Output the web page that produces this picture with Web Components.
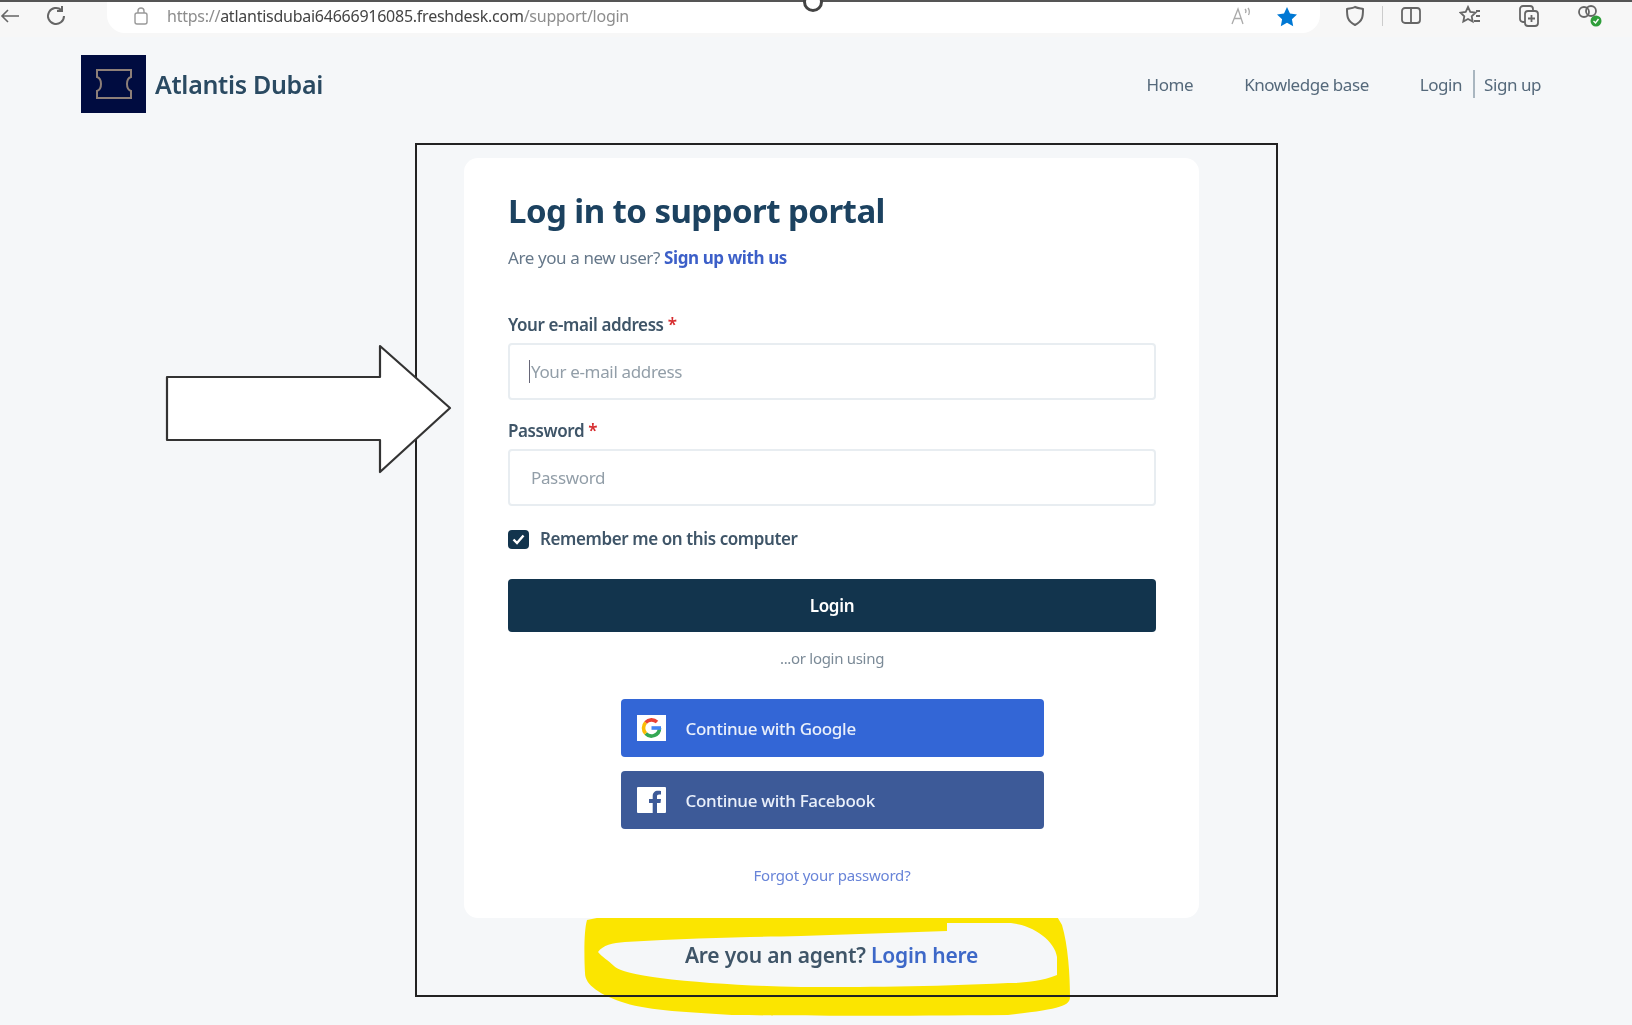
<!DOCTYPE html>
<html lang="en">
<head>
<meta charset="utf-8">
<title>Log in to support portal</title>
<style>
  html, body { margin: 0; background: #f5f7f9; }
  body { font-family: "Noto Sans", "Open Sans", sans-serif; color: #12344d; }
</style>
</head>
<body>
<page-shell>
  <browser-bar url-host="atlantisdubai64666916085.freshdesk.com"></browser-bar>
  <site-header brand="Atlantis Dubai"></site-header>
  <annotation-frame>
    <login-card>
      <text-field placeholder="Your e-mail address" caret>Your e-mail address</text-field>
      <text-field placeholder="Password" class="second">Password</text-field>
    </login-card>
    <agent-line></agent-line>
  </annotation-frame>
  <callout-arrow></callout-arrow>
  <yellow-scribble></yellow-scribble>
</page-shell>

<script>
// small helper, every element gets an open shadow root from its template
function register(tag, markup) {
  const tpl = document.createElement('template');
  tpl.innerHTML = markup;
  customElements.define(tag, class extends HTMLElement {
    constructor() {
      super();
      this.attachShadow({ mode: 'open' }).appendChild(tpl.content.cloneNode(true));
    }
    connectedCallback() {
      this.shadowRoot.querySelectorAll('[data-attr]').forEach(el => {
        const name = el.dataset.attr;
        if (el.tagName === 'INPUT') el.placeholder = this.getAttribute(name) || '';
        else el.textContent = this.getAttribute(name) || '';
      });
      const caret = this.shadowRoot.querySelector('.caret');
      if (caret && !this.hasAttribute('caret')) caret.remove();
    }
  });
}

register('page-shell', `
  <style>
    :host { display: block; position: relative; width: 1632px; height: 1025px; overflow: hidden; background: #f5f7f9; filter: blur(.55px); }
  </style>
  <slot></slot>
`);

register('browser-bar', `
  <style>
    :host { display: flex; align-items: flex-start; height: 37px; background: #f7f7f7; position: relative; border-top: 2px solid #555; box-sizing: border-box; }
    svg { display: block; flex: none; }
    .left { display: flex; align-items: center; height: 28px; gap: 24px; width: 107px; flex: none; padding-left: 0; box-sizing: border-box; }
    .address { flex: none; width: 1213px; height: 31px; background: #fff; border-radius: 0 0 18px 18px; display: flex; align-items: center; padding: 0 22px 3px 26px; box-sizing: border-box; font: 16px "Noto Sans", sans-serif; letter-spacing: -.25px; color: #8d8d8d; }
    .address b { font-weight: 400; color: #444; }
    .url { margin-left: 18px; flex: 1; white-space: nowrap; }
    .star { margin-left: 24px; }
    .tools { display: flex; align-items: center; height: 28px; gap: 37px; padding-left: 24px; }
    .sep { width: 1px; height: 20px; background: #ccc; margin: 0 -20px 0 -21px; }
    .ring { position: absolute; left: 803px; top: -10px; width: 20px; height: 20px; border: 3px solid #444; border-radius: 50%; box-sizing: border-box; background: #fff; }
  </style>
  <div class="left">
    <svg width="20" height="16" viewBox="0 0 20 16" fill="none" stroke="#666" stroke-width="1.6"><path d="M19 8H2M8 2L2 8l6 6"/></svg>
    <svg width="24" height="24" viewBox="0 0 24 24" fill="none" stroke="#666" stroke-width="2"><path d="M20 12a8 8 0 1 1-2.5-5.8"/><path d="M18 2v5h-5"/></svg>
  </div>
  <div class="address">
    <svg width="16" height="20" viewBox="0 0 16 20" fill="none" stroke="#999" stroke-width="1.4"><rect x="2" y="7" width="12" height="11" rx="2"/><path d="M5 7V5a3 3 0 0 1 6 0v2"/></svg>
    <div class="url">https://<b data-attr="url-host"></b>/support/login</div>
    <svg width="22" height="20" viewBox="0 0 22 20" fill="none" stroke="#aaa" stroke-width="1.3"><path d="M2 18L8 3l5 15M4.5 12.5h7"/><path d="M15 3c1 1 1 3 .4 4M18 2c1.500 2 1.500 5 .5 7"/></svg>
    <svg class="star" width="22" height="21" viewBox="0 0 22 21" fill="#0078d4"><path d="M11 1l3 6.500 7 .9-5.100 4.800 1.300 7L11 16.800 4.800 20.200l1.300-7L1 8.400l7-.9z"/></svg>
  </div>
  <div class="tools">
    <svg width="22" height="24" viewBox="0 0 22 24" fill="none" stroke="#666" stroke-width="2"><path d="M11 3c4 2 7 1 8 2 0 7 0 12-8 16C3 17 3 12 3 5c1-1 5 0 8-2z"/></svg>
    <i class="sep"></i>
    <svg width="22" height="20" viewBox="0 0 22 20" fill="none" stroke="#666" stroke-width="1.8"><rect x="2" y="2" width="18" height="15" rx="3"/><path d="M11 2v15"/></svg>
    <svg width="22" height="22" viewBox="0 0 22 22" fill="none" stroke="#666" stroke-width="1.800"><path d="M9 2l2.300 5 5.200.7-3.800 3.600 1 5.200L9 14l-4.700 2.500 1-5.200L1.500 7.700 6.700 7z"/><path d="M17 6h4M17 11h4M15 16h6"/></svg>
    <svg width="22" height="24" viewBox="0 0 22 24" fill="none" stroke="#666" stroke-width="1.800"><rect x="7" y="7" width="13" height="15" rx="3"/><path d="M7 18H5a3 3 0 0 1-3-3V5a3 3 0 0 1 3-3h7a3 3 0 0 1 3 3v2"/><path d="M13.500 11v7M10 14.500h7"/></svg>
    <svg width="26" height="24" viewBox="0 0 26 24" fill="none" stroke="#666" stroke-width="1.800"><circle cx="7" cy="8" r="5"/><circle cx="14" cy="7" r="5"/><circle cx="19" cy="17" r="5.500" fill="#2e9e3a" stroke="none"/><path d="M16.500 17l2 2 3-4" stroke="#fff" stroke-width="1.400"/></svg>
  </div>
  <div class="ring"></div>
`);

register('site-header', `
  <style>
    :host { display: flex; align-items: center; height: 94px; padding: 0 91px 0 81px; }
    .logo { width: 65px; height: 58px; background: #000c40; display: flex; align-items: center; justify-content: center; flex: none; }
    .brand { margin-left: 9px; font: 600 25px/1 "Noto Sans", sans-serif; color: #2a4a62; letter-spacing: -.3px; }
    nav { margin-left: auto; display: flex; align-items: center; font: 400 17px/1 "Noto Sans", sans-serif; letter-spacing: -.45px; color: #55697b; }
    nav span { white-space: nowrap; }
    .kb { margin-left: 51px; }
    .login { margin-left: 51px; }
    .bar { width: 2px; height: 28px; background: #a9b6c0; margin: 0 9px 0 11px; }
  </style>
  <div class="logo">
    <svg width="38" height="32" viewBox="0 0 38 32" fill="none" stroke="#8d7f78" stroke-width="2"><path d="M2 2h34v7c-3 1-4 3-4 7s1 6 4 7v7H2v-7c3-1 4-3 4-7s-1-6-4-7z"/></svg>
  </div>
  <div class="brand" data-attr="brand"></div>
  <nav>
    <span>Home</span>
    <span class="kb">Knowledge base</span>
    <span class="login">Login</span>
    <i class="bar"></i>
    <span>Sign up</span>
  </nav>
`);

register('annotation-frame', `
  <style>
    :host { display: block; box-sizing: border-box; width: 863px; height: 854px; margin: 12px 0 0 415px; border: 2px solid #222; padding: 13px 0 0 47px; position: relative; z-index: 2; }
  </style>
  <slot></slot>
`);

register('login-card', `
  <style>
    :host { display: block; box-sizing: border-box; width: 735px; height: 760px; padding: 33px 43px 31px 44px; background: #fff; border-radius: 14px; }
    h1 { margin: 0; font: 700 33px/40px "Noto Sans", sans-serif; letter-spacing: -.55px; color: #1c4260; }
    .sub { margin-top: 15px; font: 400 17px/24px "Noto Sans", sans-serif; letter-spacing: -.4px; color: #66788a; }
    .sub a { color: #3c5fc8; font-weight: 700; }
    ::slotted(text-field) { margin-top: 44px; }
    ::slotted(text-field.second) { margin-top: 20px; }
    .remember { margin-top: 22px; display: flex; align-items: center; height: 22px; font: 600 17px/22px "Noto Sans", sans-serif; letter-spacing: -.4px; color: #3f5568; }
    .box { width: 21px; height: 19px; border-radius: 4px; background: #12344d; margin-right: 11px; display: flex; align-items: center; justify-content: center; }
    .login { margin-top: 29px; height: 53px; border-radius: 4px; background: #12344d; color: #fff; display: flex; align-items: center; justify-content: center; font: 600 17px "Noto Sans", sans-serif; letter-spacing: -.3px; }
    .or { margin-top: 16px; text-align: center; font: 400 15px/20px "Noto Sans", sans-serif; letter-spacing: -.3px; color: #7b8a97; }
    .sso { margin-top: 31px; display: flex; flex-direction: column; align-items: center; gap: 14px; }
    .forgot { margin-top: 36px; text-align: center; font: 400 15px/20px "Noto Sans", sans-serif; letter-spacing: -.2px; color: #6884d8; }
  </style>
  <h1>Log in to support portal</h1>
  <div class="sub">Are you a new user? <a>Sign up with us</a></div>
  <slot></slot>
  <div class="remember">
    <span class="box"><svg width="13" height="11" viewBox="0 0 13 11" fill="none" stroke="#fff" stroke-width="2.400"><path d="M1.500 5.500l3.500 3.500 6.500-7.500"/></svg></span>
    Remember me on this computer
  </div>
  <div class="login">Login</div>
  <div class="or">...or login using</div>
  <div class="sso">
    <social-button style="background:#3366d6">
      <svg slot="icon" width="29" height="26" viewBox="0 0 29 26"><rect width="29" height="26" fill="#fff"/><g fill="none" stroke-width="3.600"><path d="M22.500 13a8 8 0 0 1-13.800 5.500" stroke="#34a853"/><path d="M8.700 18.500a8 8 0 0 1 0-11" stroke="#fbbc05"/><path d="M8.700 7.500A8 8 0 0 1 20 7" stroke="#ea4335"/><path d="M14.500 13H24" stroke="#4285f4"/></g></svg>
      Continue with Google
    </social-button>
    <social-button style="background:#3d5a98">
      <svg slot="icon" width="29" height="26" viewBox="0 0 29 26"><rect width="29" height="26" rx="1" fill="#fff"/><path d="M20 26V16h3.500l.5-4h-4V9.500c0-1.200.4-2 2.100-2H24V4c-.4 0-1.700-.2-3.100-.2-3.100 0-5.200 1.900-5.200 5.300V12H12v4h3.700v10z" fill="#3d5a98"/></svg>
      Continue with Facebook
    </social-button>
  </div>
  <div class="forgot">Forgot your password?</div>
`);

register('text-field', `
  <style>
    :host { display: block; position: relative; }
    label { display: block; font: 600 17px/22px "Noto Sans", sans-serif; letter-spacing: -.4px; color: #3f5568; }
    em { font-style: normal; color: #d72d30; }
    input { display: block; box-sizing: border-box; width: 648px; height: 57px; margin-top: 7px; padding: 0 21px; border: 2px solid #e8edf1; border-radius: 4px; background: #fff; font: 400 17px "Noto Sans", sans-serif; letter-spacing: -.35px; outline: none; }
    input::placeholder { color: #929ea8; opacity: 1; }
    .caret { position: absolute; left: 21px; bottom: 17px; width: 1px; height: 23px; background: #667; }
  </style>
  <label><slot></slot> <em>*</em></label>
  <input data-attr="placeholder" type="text">
  <i class="caret"></i>
`);

register('social-button', `
  <style>
    :host { display: flex; align-items: center; box-sizing: border-box; width: 423px; height: 58px; padding-left: 16px; border-radius: 4px; color: #eaf0fb; font: 500 17px "Noto Sans", sans-serif; letter-spacing: -.3px; }
    .icon { display: flex; margin-right: 20px; }
  </style>
  <span class="icon"><slot name="icon"></slot></span>
  <slot></slot>
`);

register('agent-line', `
  <style>
    :host { display: block; width: 735px; margin-top: 23px; text-align: center; font: 600 21px/28px "Noto Sans", sans-serif; letter-spacing: -.2px; color: #3f5568; }
    a { color: #3d68c8; }
  </style>
  Are you an agent? <a>Login here</a>
`);

register('callout-arrow', `
  <style>
    :host { position: absolute; left: 160px; top: 340px; z-index: 3; }
    svg { display: block; }
  </style>
  <svg width="300" height="140" viewBox="160 340 300 140"><path d="M167 377H380V346L450 408 380 472V440H167z" fill="#fff" stroke="#333" stroke-width="2.200" stroke-linejoin="round"/></svg>
`);

register('yellow-scribble', `
  <style>
    :host { position: absolute; left: 0; top: 0; z-index: 1; pointer-events: none; }
    svg { display: block; }
  </style>
  <svg width="1632" height="1025"><path fill="#fbe500" fill-rule="evenodd" d="M587 920C640 908 720 906 801 906C860 904 930 896 1008 893C1035 893 1052 905 1062 925C1068 945 1070 975 1070 997C1070 1006 1060 1009 1008 1015C900 1016 800 1016 732 1015C690 1012 650 1011 625 1003C600 995 585 985 585 973C584 955 584 930 587 920ZM598 952C603 945 612 943 625 942C690 938 750 937 801 936L947 931V923H1008C1030 923 1055 940 1057 957V975C1040 982 1020 983 1008 983C930 987 860 987 801 987C750 986 700 983 660 978C630 974 618 970 614 966C608 960 602 957 598 952Z"/></svg>
`);
</script>
</body>
</html>
